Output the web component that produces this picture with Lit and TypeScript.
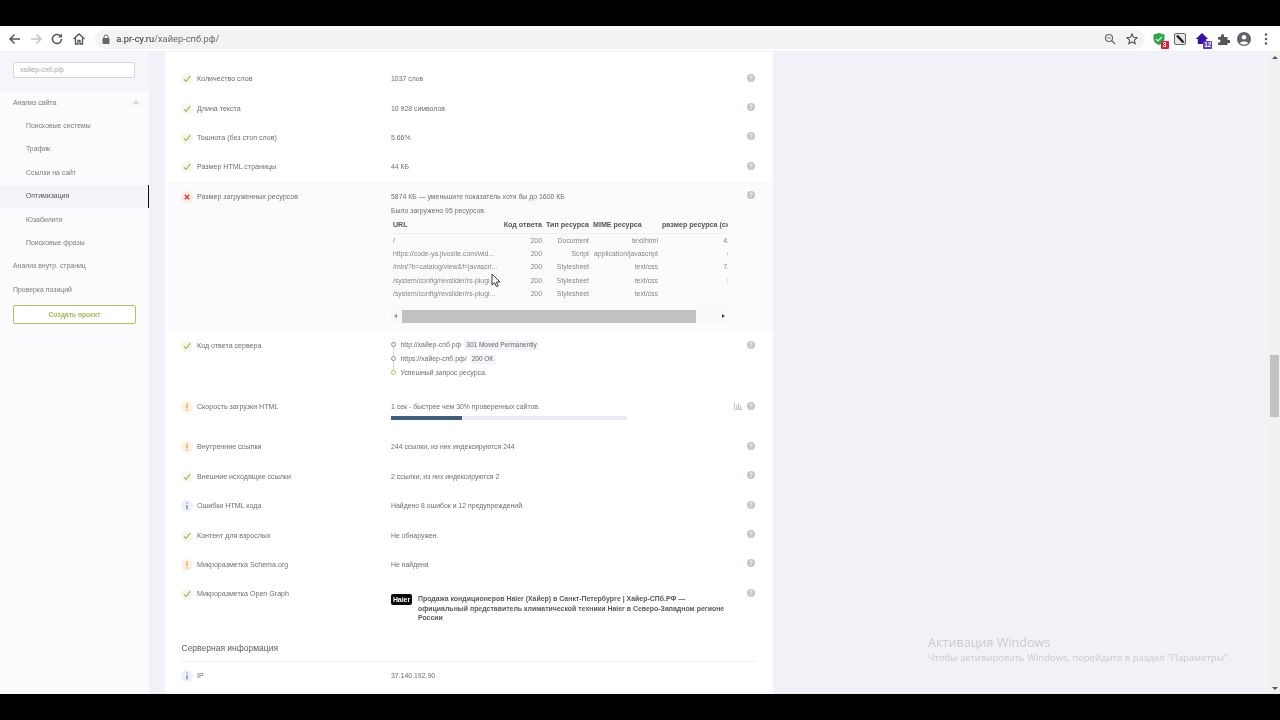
import { LitElement, html, css } from "lit";
import { customElement } from "lit/decorators.js";

type Row = { s: string; l: string; v: string; cls?: string };

const top1: Row[] = [
  { s: "ok", l: "Количество слов", v: "1037 слов" },
  { s: "ok", l: "Длина текста", v: "10 928 символов" },
  { s: "ok", l: "Тошнота (без стоп слов)", v: "5.66%" },
  { s: "ok", l: "Размер HTML страницы", v: "44 КБ" },
];
const bottom: Row[] = [
  { s: "warn", l: "Внутренние ссылки", v: "244 ссылки, из них индексируются 244" },
  { s: "ok", l: "Внешние исходящие ссылки", v: "2 ссылки, из них индексируются 2" },
  { s: "info", l: "Ошибки HTML кода", v: "Найдено 8 ошибок и 12 предупреждений." },
  { s: "ok", l: "Контент для взрослых", v: "Не обнаружен." },
  { s: "warn", l: "Микроразметка Schema.org", v: "Не найдена" },
];
const res = [
  ["/", "Document", "text/html", "43"],
  ["https://code-ya.jivosite.com/wid...", "Script", "application/javascript", "6"],
  ["/min/?b=catalog/view&f=javascri...", "Stylesheet", "text/css", "72"],
  ["/system/config/revslider/rs-plugi...", "Stylesheet", "text/css", "8"],
  ["/system/config/revslider/rs-plugi...", "Stylesheet", "text/css", ""],
];

const status = (s: string) => {
  if (s === "ok")
    return html`<span class="st ok"><svg viewBox="0 0 12 12"><path d="M3 6.300 5 8.500 9.200 3.200" fill="none" stroke="#8db24c" stroke-width="1.100"/></svg></span>`;
  if (s === "bad")
    return html`<span class="st bad"><svg viewBox="0 0 12 12"><path d="M3.800 3.800l4.400 4.400M8.200 3.800l-4.400 4.400" fill="none" stroke="#c8492f" stroke-width="1.400"/></svg></span>`;
  if (s === "warn")
    return html`<span class="st warn"><svg viewBox="0 0 12 12"><path d="M6 2.400v4.600M6 8.200v1.500" fill="none" stroke="#ee9a4d" stroke-width="1.300"/></svg></span>`;
  return html`<span class="st info"><svg viewBox="0 0 12 12"><path d="M6 2.400v1.300M6 4.900v4.600" fill="none" stroke="#6f86b5" stroke-width="1.300"/></svg></span>`;
};
const help = html`<span class="help"><svg viewBox="0 0 8 8"><circle cx="4" cy="4" r="4" fill="#c3c6cb"/><path d="M2.800 3.100c0-1.500 2.500-1.500 2.500-.1 0 .9-1.300.9-1.300 1.800M4 5.500v.9" fill="none" stroke="#fff" stroke-width=".8"/></svg></span>`;

const rowT = (r: Row) => html`<div class="row">
  <div class="name">${status(r.s)}<span>${r.l}</span></div>
  <div class="val">${r.v}</div>
  ${help}
</div>`;

@customElement("app-root")
export class AppRoot extends LitElement {
  static styles = css`
    :host { display: flex; flex-direction: column; height: 720px; overflow: hidden; position: relative;
      font-family: "Liberation Sans", Arial, sans-serif; font-size: 6.9px; line-height: 10px; color: #6e6e6e; background: #f0f2f7; }
    .black { height: 26px; background: #000; flex: none; }
    .toolbar { height: 24px; padding-top: 1px; background: #fff; border-bottom: 1px solid #eef0f3; flex: none; display: flex; align-items: center; filter: blur(.35px); }
    .tb-ico { flex: none; width: 21.3px; height: 16px; display: flex; justify-content: center; align-items: center; }
    .tb-ico svg { width: 14px; height: 14px; display: block; }
    .navs { display: flex; padding-left: 4px; }
    .pill { margin-left: 6px; width: 1050px; height: 19px; border-radius: 10px; background: #f1f3f4; display: flex; align-items: center; box-sizing: border-box; padding: 0 7px 0 6px; font-family: Roboto, "Liberation Sans", sans-serif; font-size: 9.3px; color: #666; }
    .pill .lock { width: 10px; height: 10px; margin: 0 5px 0 0; }
    .pill b { font-weight: 400; color: #2b2b2b; }
    .pill .url { flex: 1; }
    .pill svg { display: block; width: 12px; height: 12px; margin-left: 10px; }
    .exts { display: flex; padding-left: 3px; align-items: center; }
    .ext { width: 21.4px; height: 18px; position: relative; display: flex; justify-content: center; align-items: center; }
    .ext svg { width: 14px; height: 14px; display: block; }
    .badge { position: absolute; right: 1px; bottom: -1px; min-width: 8px; height: 8px; padding: 0 1px; box-sizing: border-box; color: #fff; font: 700 6.500px/8px "Liberation Sans", sans-serif; text-align: center; border-radius: 1px; }
    .badge.red { background: #df1f3c; }
    .badge.pur { background: #5c3cb4; right: 0; }

    .main { flex: 1; min-height: 0; display: flex; filter: blur(.35px); }
    .side { width: 149px; flex: none; background: #fcfcfe; box-sizing: border-box; }
    .side-top { height: 39px; background: #f5f6fb; box-sizing: border-box; padding: 10px 14px 0 13px; }
    .input { height: 16px; width: 122px; box-sizing: border-box; border: 1px solid #d4d6d8; border-radius: 2px; background: #fff; color: #a9abae; padding-left: 6px; line-height: 14px; }
    .nav { height: 23.400px; display: flex; align-items: center; justify-content: space-between; padding: 0 10px 0 13px; box-sizing: border-box; color: #7b7b7b; }
    .nav.sub { padding-left: 26px; }
    .nav.active { background: #f4f5fa; border-right: 1.500px solid #111; color: #555; padding-right: 9px; }
    .nav svg { width: 6px; height: 4px; display: block; }
    .create { margin: 3.300px 13px 0 13px; height: 19.500px; border: 1px solid #a9c567; border-radius: 2px; box-sizing: border-box; color: #9dbb5a; font-weight: 700; font-size: 6.700px; display: flex; align-items: center; justify-content: center; background: #fff; }

    .content { width: 608px; margin-left: 16px; flex: none; background: #fff; overflow: hidden; }
    .strip { height: 12.500px; padding-left: 226px; display: flex; gap: 42px; }
    .strip span { width: 17px; margin-top: -8px; white-space: nowrap; color: #777; }
    .row { display: grid; grid-template-columns: 226px 1fr 18px; padding: 9.700px 16px 9.700px 0; position: relative; box-sizing: border-box; }
    .name { display: flex; padding-left: 16px; position: relative; font-size: 7.100px; }
    .name > span:last-child { margin-left: 16px; }
    .st { position: absolute; left: 16px; top: -1px; width: 12px; height: 12px; border-radius: 50%; }
    .st svg { display: block; width: 12px; height: 12px; }
    .st.ok { background: #f6f9ee; }
    .st.bad { background: #fbe9e5; }
    .st.warn { background: #fdf1e5; }
    .st.info { background: #eef1f9; }
    .help { position: absolute; right: 18px; top: 9px; width: 8px; height: 8px; }
    .help svg { width: 8px; height: 8px; display: block; }
    .tinted { background: #fbfbfc; height: 149.500px; }
    .srv { height: 61.300px; }
    .speed { height: 40px; }
    .og { height: 60.600px; }
    .line { margin-bottom: 4.500px; }
    .table { width: 337px; overflow: hidden; margin-top: .5px; }
    .tr { display: grid; grid-template-columns: 112px 39px 47px 69px 73px; height: 13.400px; line-height: 13.400px; white-space: nowrap; width: 342px; color: #858585; }
    .tr.head { height: 14px; color: #555; font-weight: 700; font-size: 7.100px; border-bottom: 1px solid #f0f0f2; margin-top: 2px; }
    .tr span { text-align: right; overflow: hidden; }
    .tr span:first-child { text-align: left; padding-left: 2px; text-overflow: clip; }
    .tr span.sz { text-align: right; }
    .tr.head span.sz { text-align: left; padding-left: 4px; overflow: visible; }
    .tr.head span.mime { text-align: left; padding-left: 4px; }
    .hs { margin-top: 9px; width: 337px; height: 13px; background: #f9f9fa; display: flex; align-items: center; justify-content: space-between; padding: 0 3px; box-sizing: border-box; position: relative; }
    .hs i { position: absolute; left: 11px; width: 294px; top: 0; bottom: 0; background: #c1c1c1; }
    .tri-l { border: 2.500px solid transparent; border-right: 3px solid #8a8a8a; border-left: 0; }
    .tri-r { border: 2.500px solid transparent; border-left: 3px solid #444; border-right: 0; }
    .chain { position: relative; margin-top: -3.500px; }
    .step { display: flex; height: 14px; align-items: center; padding-left: 9.500px; position: relative; }
    .step::before { content: ""; position: absolute; left: 0; top: 4.500px; width: 5px; height: 5px; border: 1px solid #8c8c8c; border-radius: 50%; box-sizing: border-box; background: #fff; z-index: 1; }
    .step:not(:last-child)::after { content: ""; position: absolute; left: 2px; top: 9px; height: 10px; width: 1px; background: #d9d9d9; }
    .step.good::before { border-color: #aec55f; }
    .chip { background: #f3f5fa; margin-left: 3px; padding: 0 2px; color: #666; line-height: 10px; font-size: 6.500px; }
    .bar { width: 236px; height: 3.500px; background: #e9eaf5; margin-top: 4px; }
    .bar i { display: block; width: 71px; height: 3.500px; background: #3f5f7a; }
    .chart { position: absolute; right: 31px; top: 9px; width: 8px; height: 8px; }
    .og-box { display: grid; grid-template-columns: 21px 1fr; column-gap: 6px; margin-top: 5px; }
    .logo { background: #0a0a0a; color: #fff; font-weight: 700; height: 11px; line-height: 11px; text-align: center; border-radius: 2px; }
    .og-text { font-weight: 700; color: #5a5a5a; line-height: 9.500px; font-size: 6.950px; max-width: 309px; }
    .h2 { margin: 0 16px 0 16px; padding: 1.500px 0 0 .5px; height: 22px; box-sizing: border-box; font-size: 8.500px; line-height: 13.500px; color: #5b5b66; border-bottom: 1px solid #eef0f2; }
    .ip { padding-top: 8.800px; }

    .rail { flex: 1; position: relative; min-width: 0; display: flex; justify-content: flex-end; }
    .sb { width: 10px; background: #f1f1f1; position: relative; display: flex; flex-direction: column; justify-content: space-between; align-items: center; padding: 4px 0; box-sizing: border-box; }
    .sb i { position: absolute; left: 0; width: 9px; top: 303px; height: 62px; background: #c1c1c1; }
    .up { border: 3px solid transparent; border-bottom: 3px solid #555; border-top: 0; }
    .dn { border: 3px solid transparent; border-top: 3px solid #555; border-bottom: 0; }
    .wm { position: absolute; left: 155px; bottom: 29px; font-family: "Open Sans", sans-serif; color: #c9cbd0; white-space: nowrap; }
    .wm div:first-child { font-size: 12.600px; line-height: 16px; }
    .wm div:last-child { font-size: 9.500px; line-height: 14px; }
    .cursor { position: absolute; left: 491px; top: 273px; width: 10px; height: 15px; }
  `;

  render() {
    return html`
      <div class="black"></div>
      <div class="toolbar">
        <div class="navs">
          <div class="tb-ico"><svg viewBox="0 0 14 14"><path d="M12 7H2.500M6.500 2.500 2 7l4.500 4.500" fill="none" stroke="#555" stroke-width="1.500"/></svg></div>
          <div class="tb-ico"><svg viewBox="0 0 14 14"><path d="M2 7h9.500M7.500 2.500 12 7l-4.500 4.500" fill="none" stroke="#c2c4c6" stroke-width="1.500"/></svg></div>
          <div class="tb-ico"><svg viewBox="0 0 14 14"><path d="M11.500 7a4.500 4.500 0 1 1-1.300-3.200" fill="none" stroke="#555" stroke-width="1.500"/><path d="M12 1.500v4H8z" fill="#555"/></svg></div>
          <div class="tb-ico"><svg viewBox="0 0 14 14"><path d="M1.500 7 7 2l5.500 5M3.500 6v6h2.500V8.500h2V12h2.500V6" fill="none" stroke="#555" stroke-width="1.300"/></svg></div>
        </div>
        <div class="pill">
          <svg class="lock" viewBox="0 0 10 10"><rect x="1.500" y="4" width="7" height="6" rx="1" fill="#666"/><path d="M3 4.500V3a2 2 0 0 1 4 0v1.500" fill="none" stroke="#666"/></svg>
          <span class="url"><b>a.pr-cy.ru</b>/хайер-спб.рф/</span>
          <svg viewBox="0 0 12 12"><circle cx="5" cy="5" r="3.500" fill="none" stroke="#666" stroke-width="1.200"/><path d="M7.500 7.500 11 11M3.500 5h3" stroke="#666" stroke-width="1.200"/></svg>
          <svg viewBox="0 0 12 12"><path d="M6 1l1.500 3.300 3.600.4-2.700 2.400.8 3.600L6 8.900l-3.200 1.800.8-3.600L.9 4.700l3.600-.4z" fill="none" stroke="#555" stroke-width="1.100"/></svg>
        </div>
        <div class="exts">
          <div class="ext"><svg viewBox="0 0 14 14"><path d="M7 1l5.500 1.500v4.500c0 3-2.500 5-5.500 6-3-1-5.500-3-5.500-6V2.500z" fill="#2ea34f"/><path d="M4 7l2 2 4-4" fill="none" stroke="#d8f0dc" stroke-width="1.200"/></svg><span class="badge red">3</span></div>
          <div class="ext"><svg viewBox="0 0 14 14"><rect x="1.500" y="1.500" width="11" height="11" rx="1.500" fill="#e8e8e8" stroke="#666"/><path d="M4 3.500l6.500 7" stroke="#222" stroke-width="2.500"/></svg></div>
          <div class="ext"><svg viewBox="0 0 14 14"><path d="M7 1 .8 7h2v5h8.400V7h2z" fill="#3a12a8"/></svg><span class="badge pur">12</span></div>
          <div class="ext"><svg viewBox="0 0 14 14"><path d="M2 5h3V3.500a1.500 1.500 0 0 1 3 0V5h3.500v3H13a1.500 1.500 0 0 1 0 3h-1.500v2H2v-2.500h1a1.500 1.500 0 0 0 0-3H2z" fill="#555"/></svg></div>
          <div class="ext"><svg viewBox="0 0 14 14"><circle cx="7" cy="7" r="7" fill="#5f6368"/><circle cx="7" cy="5.200" r="2.300" fill="#fff"/><path d="M2.800 11c1-2 7.400-2 8.400 0a6 6 0 0 1-8.400 0z" fill="#fff"/></svg></div>
          <div class="ext"><svg viewBox="0 0 14 14"><circle cx="7" cy="2.500" r="1.200" fill="#555"/><circle cx="7" cy="7" r="1.200" fill="#555"/><circle cx="7" cy="11.500" r="1.200" fill="#555"/></svg></div>
        </div>
      </div>
      <div class="main">
        <div class="side">
          <div class="side-top"><div class="input">хайер-спб.рф</div></div>
          <div class="nav"><span>Анализ сайта</span><svg viewBox="0 0 6 4"><path d="M.5 3.500 3 1l2.500 2.500" fill="none" stroke="#aaa"/></svg></div>
          <div class="nav sub">Поисковые системы</div>
          <div class="nav sub">Трафик</div>
          <div class="nav sub">Ссылки на сайт</div>
          <div class="nav sub active">Оптимизация</div>
          <div class="nav sub">Юзабилити</div>
          <div class="nav sub">Поисковые фразы</div>
          <div class="nav">Анализ внутр. страниц</div>
          <div class="nav">Проверка позиций</div>
          <div class="create">Создать проект</div>
        </div>
        <div class="content">
          <div class="strip"><span>1024</span><span>1024</span><span>1024</span><span>1024</span><span>1024</span><span>1024</span></div>
          ${top1.map(rowT)}
          <div class="row tinted">
            <div class="name">${status("bad")}<span>Размер загруженных ресурсов</span></div>
            <div>
              <div class="line">5874 КБ — уменьшите показатель хотя бы до 1600 КБ</div>
              <div>Было загружено 95 ресурсов.</div>
              <div class="table">
                <div class="tr head"><span>URL</span><span>Код ответа</span><span>Тип ресурса</span><span class="mime">MIME ресурса</span><span class="sz">размер ресурса (сжатый)</span></div>
                ${res.map(
                  (r) => html`<div class="tr"><span>${r[0]}</span><span>200</span><span>${r[1]}</span><span>${r[2]}</span><span class="sz">${r[3]}</span></div>`
                )}
              </div>
              <div class="hs"><b class="tri-l"></b><i></i><b class="tri-r"></b></div>
            </div>
            ${help}
          </div>
          <div class="row srv">
            <div class="name">${status("ok")}<span>Код ответа сервера</span></div>
            <div class="chain">
              <div class="step">http://хайер-спб.рф <span class="chip">301 Moved Permanently</span></div>
              <div class="step">https://хайер-спб.рф/ <span class="chip">200 OK</span></div>
              <div class="step good">Успешный запрос ресурса.</div>
            </div>
            ${help}
          </div>
          <div class="row speed">
            <div class="name">${status("warn")}<span>Скорость загрузки HTML</span></div>
            <div>
              <div>1 сек - быстрее чем 30% проверенных сайтов.</div>
              <div class="bar"><i></i></div>
            </div>
            <svg class="chart" viewBox="0 0 8 8"><path d="M.5 0v7.500H8" fill="none" stroke="#c5c8cc"/><path d="M2 3h1.300v4H2zM4 1.500h1.300V7H4zM6 4h1.300v3H6z" fill="#c5c8cc"/></svg>
            ${help}
          </div>
          ${bottom.map(rowT)}
          <div class="row og">
            <div class="name">${status("ok")}<span>Микроразметка Open Graph</span></div>
            <div class="og-box">
              <div class="logo">Haier</div>
              <div class="og-text">Продажа кондиционеров Haier (Хайер) в Санкт-Петербурге | Хайер-СПб.РФ — официальный представитель климатической техники Haier в Северо-Западном регионе России</div>
            </div>
            ${help}
          </div>
          <div class="h2">Серверная информация</div>
          <div class="row ip">
            <div class="name">${status("info")}<span>IP</span></div>
            <div class="val">37.140.192.90</div>
          </div>
        </div>
        <div class="rail">
          <div class="wm"><div>Активация Windows</div><div>Чтобы активировать Windows, перейдите в раздел "Параметры".</div></div>
          <div class="sb"><b class="up"></b><i></i><b class="dn"></b></div>
        </div>
      </div>
      <div class="black"></div>
      <svg class="cursor" viewBox="0 0 10 15"><path d="M1 1v11l2.600-2.400 1.800 4 1.800-.8-1.800-3.800H9z" fill="#fff" stroke="#222" stroke-width=".9"/></svg>
    `;
  }
}
